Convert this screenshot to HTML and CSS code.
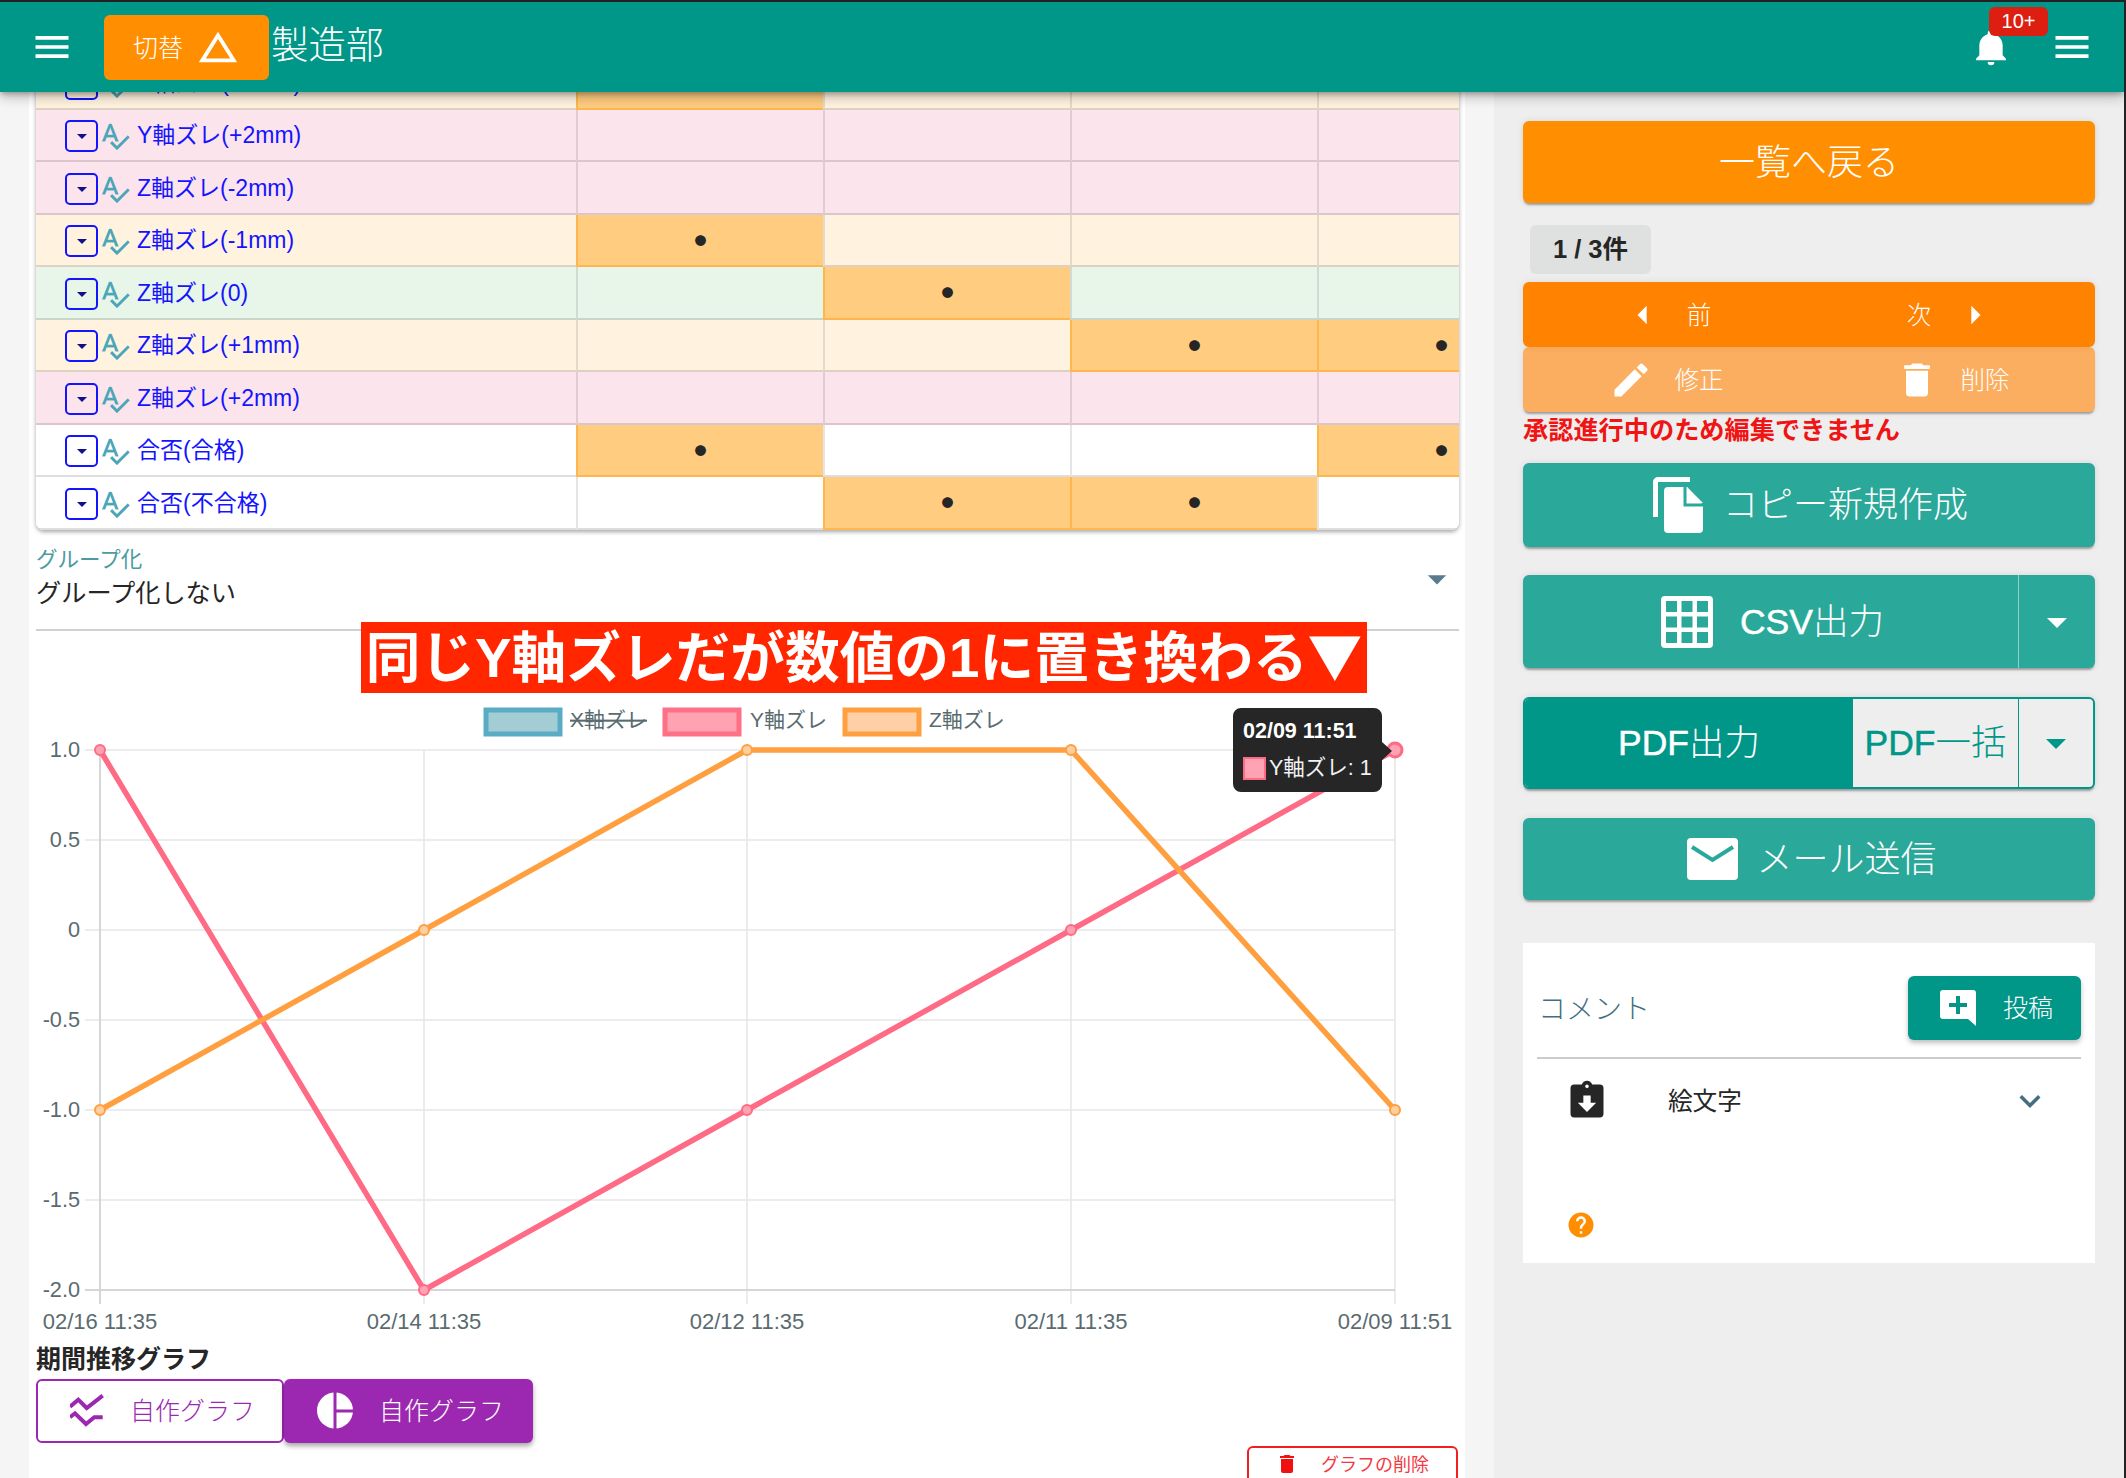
FILE: index.html
```html
<!DOCTYPE html>
<html lang="ja">
<head>
<meta charset="utf-8">
<title>製造部</title>
<link rel="stylesheet" href="styles.css">
</head>
<body>
<div class="page">
  <header class="topbar">
    <svg class="menu-icon" viewBox="0 0 24 24"><path d="M3,6H21V8H3V6M3,11H21V13H3V11M3,16H21V18H3V16Z"/></svg>
    <button class="switch-btn"><span>切替</span><svg class="switch-icon" viewBox="0 0 24 24"><path d="M12,7.77L18.39,18H5.61L12,7.77M12,4L2,20H22L12,4Z"/></svg></button>
    <h1 class="title">製造部</h1>
    <div class="bell">
      <svg class="bell-icon" viewBox="0 0 24 24"><path d="M21,19V20H3V19L5,17V11C5,7.9 7.03,5.17 10,4.29C10,4.19 10,4.1 10,4A2,2 0 0,1 12,2A2,2 0 0,1 14,4C14,4.1 14,4.19 14,4.29C16.97,5.17 19,7.9 19,11V17L21,19M14,21A2,2 0 0,1 12,23A2,2 0 0,1 10,21Z"/></svg>
      <span class="badge">10+</span>
    </div>
    <svg class="menu-icon menu-right" viewBox="0 0 24 24"><path d="M3,6H21V8H3V6M3,11H21V13H3V11M3,16H21V18H3V16Z"/></svg>
  </header>

  <div class="body">
    <div class="gutter"></div>
    <main class="content">
      <div class="table-wrap">
        <table class="matrix">
          <colgroup><col class="c-name"><col class="c-val"><col class="c-val"><col class="c-val"><col class="c-val"></colgroup>
          <tbody>
            <tr class="cream"><td><div class="name"><span class="check"><svg viewBox="0 0 24 24"><path d="M7,10L12,15L17,10H7Z"/></svg></span><svg class="spell" viewBox="0 0 24 24"><path d="M21.59,11.59L13.5,19.68L9.83,16L8.42,17.41L13.5,22.5L23,13M6.43,11L8.5,5.5L10.57,11M12.45,16H14.54L9.43,3H7.57L2.46,16H4.55L5.67,13H11.31L12.45,16Z"/></svg><span class="name-text">Y軸ズレ(+1mm)</span></div></td><td class="on">●</td><td></td><td></td><td></td></tr>
            <tr class="pink"><td><div class="name"><span class="check"><svg viewBox="0 0 24 24"><path d="M7,10L12,15L17,10H7Z"/></svg></span><svg class="spell" viewBox="0 0 24 24"><path d="M21.59,11.59L13.5,19.68L9.83,16L8.42,17.41L13.5,22.5L23,13M6.43,11L8.5,5.5L10.57,11M12.45,16H14.54L9.43,3H7.57L2.46,16H4.55L5.67,13H11.31L12.45,16Z"/></svg><span class="name-text">Y軸ズレ(+2mm)</span></div></td><td></td><td></td><td></td><td></td></tr>
            <tr class="pink"><td><div class="name"><span class="check"><svg viewBox="0 0 24 24"><path d="M7,10L12,15L17,10H7Z"/></svg></span><svg class="spell" viewBox="0 0 24 24"><path d="M21.59,11.59L13.5,19.68L9.83,16L8.42,17.41L13.5,22.5L23,13M6.43,11L8.5,5.5L10.57,11M12.45,16H14.54L9.43,3H7.57L2.46,16H4.55L5.67,13H11.31L12.45,16Z"/></svg><span class="name-text">Z軸ズレ(-2mm)</span></div></td><td></td><td></td><td></td><td></td></tr>
            <tr class="cream"><td><div class="name"><span class="check"><svg viewBox="0 0 24 24"><path d="M7,10L12,15L17,10H7Z"/></svg></span><svg class="spell" viewBox="0 0 24 24"><path d="M21.59,11.59L13.5,19.68L9.83,16L8.42,17.41L13.5,22.5L23,13M6.43,11L8.5,5.5L10.57,11M12.45,16H14.54L9.43,3H7.57L2.46,16H4.55L5.67,13H11.31L12.45,16Z"/></svg><span class="name-text">Z軸ズレ(-1mm)</span></div></td><td class="on">●</td><td></td><td></td><td></td></tr>
            <tr class="green"><td><div class="name"><span class="check"><svg viewBox="0 0 24 24"><path d="M7,10L12,15L17,10H7Z"/></svg></span><svg class="spell" viewBox="0 0 24 24"><path d="M21.59,11.59L13.5,19.68L9.83,16L8.42,17.41L13.5,22.5L23,13M6.43,11L8.5,5.5L10.57,11M12.45,16H14.54L9.43,3H7.57L2.46,16H4.55L5.67,13H11.31L12.45,16Z"/></svg><span class="name-text">Z軸ズレ(0)</span></div></td><td></td><td class="on">●</td><td></td><td></td></tr>
            <tr class="cream"><td><div class="name"><span class="check"><svg viewBox="0 0 24 24"><path d="M7,10L12,15L17,10H7Z"/></svg></span><svg class="spell" viewBox="0 0 24 24"><path d="M21.59,11.59L13.5,19.68L9.83,16L8.42,17.41L13.5,22.5L23,13M6.43,11L8.5,5.5L10.57,11M12.45,16H14.54L9.43,3H7.57L2.46,16H4.55L5.67,13H11.31L12.45,16Z"/></svg><span class="name-text">Z軸ズレ(+1mm)</span></div></td><td></td><td></td><td class="on">●</td><td class="on">●</td></tr>
            <tr class="pink"><td><div class="name"><span class="check"><svg viewBox="0 0 24 24"><path d="M7,10L12,15L17,10H7Z"/></svg></span><svg class="spell" viewBox="0 0 24 24"><path d="M21.59,11.59L13.5,19.68L9.83,16L8.42,17.41L13.5,22.5L23,13M6.43,11L8.5,5.5L10.57,11M12.45,16H14.54L9.43,3H7.57L2.46,16H4.55L5.67,13H11.31L12.45,16Z"/></svg><span class="name-text">Z軸ズレ(+2mm)</span></div></td><td></td><td></td><td></td><td></td></tr>
            <tr class="plain"><td><div class="name"><span class="check"><svg viewBox="0 0 24 24"><path d="M7,10L12,15L17,10H7Z"/></svg></span><svg class="spell" viewBox="0 0 24 24"><path d="M21.59,11.59L13.5,19.68L9.83,16L8.42,17.41L13.5,22.5L23,13M6.43,11L8.5,5.5L10.57,11M12.45,16H14.54L9.43,3H7.57L2.46,16H4.55L5.67,13H11.31L12.45,16Z"/></svg><span class="name-text">合否(合格)</span></div></td><td class="on">●</td><td></td><td></td><td class="on">●</td></tr>
            <tr class="plain"><td><div class="name"><span class="check"><svg viewBox="0 0 24 24"><path d="M7,10L12,15L17,10H7Z"/></svg></span><svg class="spell" viewBox="0 0 24 24"><path d="M21.59,11.59L13.5,19.68L9.83,16L8.42,17.41L13.5,22.5L23,13M6.43,11L8.5,5.5L10.57,11M12.45,16H14.54L9.43,3H7.57L2.46,16H4.55L5.67,13H11.31L12.45,16Z"/></svg><span class="name-text">合否(不合格)</span></div></td><td></td><td class="on">●</td><td class="on">●</td><td></td></tr>
          </tbody>
        </table>
      </div>

      <div class="group-select">
        <div class="group-text">
          <div class="group-label">グループ化</div>
          <div class="group-value">グループ化しない</div>
        </div>
        <svg class="group-caret" viewBox="0 0 24 24"><path d="M7,10L12,15L17,10H7Z"/></svg>
      </div>

      <div class="chart">
        <div class="banner">同じY軸ズレだが数値の1に置き換わる<span class="banner-arrow">▼</span></div>
        <svg class="chart-svg" viewBox="36 630 1423 715">
          <g class="grid">
            <line x1="85" y1="749" x2="1395" y2="749"/>
            <line x1="85" y1="839" x2="1395" y2="839"/>
            <line x1="85" y1="929" x2="1395" y2="929"/>
            <line x1="85" y1="1019" x2="1395" y2="1019"/>
            <line x1="85" y1="1109" x2="1395" y2="1109"/>
            <line x1="85" y1="1199" x2="1395" y2="1199"/>
            <line x1="424" y1="749" x2="424" y2="1303"/>
            <line x1="747" y1="749" x2="747" y2="1303"/>
            <line x1="1071" y1="749" x2="1071" y2="1303"/>
            <line x1="1395" y1="749" x2="1395" y2="1303"/>
          </g>
          <g class="axis">
            <line x1="85" y1="1289" x2="1395" y2="1289"/>
            <line x1="100" y1="749" x2="100" y2="1303"/>
          </g>
          <g class="ticks-y">
            <text x="80" y="756">1.0</text>
            <text x="80" y="846">0.5</text>
            <text x="80" y="936">0</text>
            <text x="80" y="1026">-0.5</text>
            <text x="80" y="1116">-1.0</text>
            <text x="80" y="1206">-1.5</text>
            <text x="80" y="1296">-2.0</text>
          </g>
          <g class="ticks-x">
            <text x="100" y="1328">02/16 11:35</text>
            <text x="424" y="1328">02/14 11:35</text>
            <text x="747" y="1328">02/12 11:35</text>
            <text x="1071" y="1328">02/11 11:35</text>
            <text x="1395" y="1328">02/09 11:51</text>
          </g>
          <g class="legend">
            <rect class="lg-blue" x="486" y="709" width="74" height="24"/>
            <text class="struck" x="570" y="726">X軸ズレ</text>
            <rect class="lg-pink" x="665" y="709" width="74" height="24"/>
            <text x="750" y="726">Y軸ズレ</text>
            <rect class="lg-orange" x="845" y="709" width="74" height="24"/>
            <text x="929" y="726">Z軸ズレ</text>
          </g>
          <polyline class="line-pink" points="100,749 424,1289 747,1109 1071,929 1395,749"/>
          <polyline class="line-orange" points="100,1109 424,929 747,749 1071,749 1395,1109"/>
          <g class="pts-pink">
            <circle cx="100" cy="749" r="5"/><circle cx="424" cy="1289" r="5"/><circle cx="747" cy="1109" r="5"/><circle cx="1071" cy="929" r="5"/><circle class="pt-hover" cx="1395" cy="749" r="7"/>
          </g>
          <g class="pts-orange">
            <circle cx="100" cy="1109" r="5"/><circle cx="424" cy="929" r="5"/><circle cx="747" cy="749" r="5"/><circle cx="1071" cy="749" r="5"/><circle cx="1395" cy="1109" r="5"/>
          </g>
          <path class="tip" d="M1241,707H1374a8,8 0 0 1 8,8V741L1392,750L1382,759V783a8,8 0 0 1 -8,8H1241a8,8 0 0 1 -8,-8V715a8,8 0 0 1 8,-8Z"/>
          <text class="tip-title" x="1243" y="737">02/09 11:51</text>
          <rect class="tip-swatch" x="1244" y="757" width="21" height="21"/>
          <text class="tip-body" x="1269" y="774">Y軸ズレ: 1</text>
        </svg>
      </div>

      <h2 class="period">期間推移グラフ</h2>
      <div class="graph-btns">
        <button class="graph-btn outline">
          <svg class="graph-icon" viewBox="0 0 34 33"><path d="M0 12.7L8.3 5.7L16.7 14L32.7 1.7M0 23.3L5 19.3L16 30L24.3 23.3H32.7"/></svg>
          <span>自作グラフ</span>
        </button>
        <button class="graph-btn solid">
          <svg class="pie-icon" viewBox="0 0 36 37"><circle class="pie" cx="18" cy="18.5" r="18"/><path class="pie-cut" d="M18 0V37M18 19H36"/></svg>
          <span>自作グラフ</span>
        </button>
      </div>
      <div class="delete-row">
        <button class="delete-btn">
          <svg class="delete-icon" viewBox="0 0 24 24"><path d="M19,4H15.5L14.5,3H9.5L8.5,4H5V6H19M6,19A2,2 0 0,0 8,21H16A2,2 0 0,0 18,19V7H6V19Z"/></svg>
          <span>グラフの削除</span>
        </button>
      </div>
    </main>
    <div class="gutter"></div>

    <aside class="side">
      <button class="btn orange back"><span>一覧へ戻る</span></button>
      <div class="count">1 / 3件</div>
      <div class="btn-pair nav">
        <button class="half"><svg class="i44" viewBox="0 0 24 24"><path d="M14,7L9,12L14,17V7Z"/></svg><span>前</span></button>
        <button class="half"><span>次</span><svg class="i44" viewBox="0 0 24 24"><path d="M10,17L15,12L10,7V17Z"/></svg></button>
      </div>
      <div class="btn-pair edit">
        <button class="half"><svg class="i44" viewBox="0 0 24 24"><path d="M20.71,7.04C21.1,6.65 21.1,6 20.71,5.63L18.37,3.29C18,2.9 17.35,2.9 16.96,3.29L15.12,5.12L18.87,8.87M3,17.25V21H6.75L17.81,9.93L14.06,6.18L3,17.25Z"/></svg><span>修正</span></button>
        <button class="half"><svg class="i44" viewBox="0 0 24 24"><path d="M19,4H15.5L14.5,3H9.5L8.5,4H5V6H19M6,19A2,2 0 0,0 8,21H16A2,2 0 0,0 18,19V7H6V19Z"/></svg><span>削除</span></button>
      </div>
      <p class="notice">承認進行中のため編集できません</p>

      <button class="btn teal copy">
        <svg class="copy-icon" viewBox="0 0 50 56"><path d="M0 40V5a5 5 0 0 1 5-5h32v5H5v35z"/><path d="M15 10h19l16 18v24a4 4 0 0 1-4 4H15a4 4 0 0 1-4-4V14a4 4 0 0 1 4-4z"/><path class="copy-fold" d="M32 10V28H50"/><path d="M34 10L50 26H34Z"/></svg>
        <span>コピー新規作成</span>
      </button>

      <div class="split teal csv">
        <button class="split-main">
          <svg class="grid-icon" viewBox="0 0 52 52"><rect class="g-base" width="52" height="52" rx="4"/><rect x="5" y="5" width="11" height="11"/><rect x="20.5" y="5" width="11" height="11"/><rect x="36" y="5" width="11" height="11"/><rect x="5" y="20.5" width="11" height="11"/><rect x="20.5" y="20.5" width="11" height="11"/><rect x="36" y="20.5" width="11" height="11"/><rect x="5" y="36" width="11" height="11"/><rect x="20.5" y="36" width="11" height="11"/><rect x="36" y="36" width="11" height="11"/></svg>
          <span><span class="latin">CSV</span>出力</span>
        </button>
        <button class="split-caret"><svg class="i44" viewBox="0 0 24 24"><path d="M7,10L12,15L17,10H7Z"/></svg></button>
      </div>

      <div class="split pdf">
        <button class="pdf-main"><span class="latin">PDF</span>出力</button>
        <button class="pdf-all"><span class="latin">PDF</span>一括</button>
        <button class="split-caret pdf-caret"><svg class="i44" viewBox="0 0 24 24"><path d="M7,10L12,15L17,10H7Z"/></svg></button>
      </div>

      <button class="btn teal mail">
        <svg class="mail-icon" viewBox="0 0 51 42"><rect class="m-base" width="51" height="42" rx="4"/><path class="m-flap" d="M5 9L25.5 22L46 9"/></svg>
        <span>メール送信</span>
      </button>

      <section class="comment">
        <div class="comment-head">
          <span class="comment-title">コメント</span>
          <button class="post-btn">
            <svg class="post-icon" viewBox="0 0 36 36"><path class="p-base" d="M3 0H33a3 3 0 0 1 3 3V36L28 29H3a3 3 0 0 1-3-3V3a3 3 0 0 1 3-3Z"/><path class="p-plus" d="M18 6V24M9 15H27"/></svg>
            <span>投稿</span>
          </button>
        </div>
        <div class="comment-item">
          <svg class="i44 clip" viewBox="0 0 24 24"><path d="M19,3H14.82C14.4,1.84 13.3,1 12,1C10.7,1 9.6,1.84 9.18,3H5A2,2 0 0,0 3,5V19A2,2 0 0,0 5,21H19A2,2 0 0,0 21,19V5A2,2 0 0,0 19,3M12,3A1,1 0 0,1 13,4A1,1 0 0,1 12,5A1,1 0 0,1 11,4A1,1 0 0,1 12,3M12,18L7,13H10V9H14V13H17L12,18Z"/></svg>
          <span class="emoji">絵文字</span>
          <svg class="chev" viewBox="0 0 24 24"><path d="M7.41,8.58L12,13.17L16.59,8.58L18,10L12,16L6,10L7.41,8.58Z"/></svg>
        </div>
        <svg class="help" viewBox="0 0 24 24"><path d="M15.07,11.25L14.17,12.17C13.45,12.89 13,13.5 13,15H11V14.5C11,13.39 11.45,12.39 12.17,11.67L13.41,10.41C13.78,10.05 14,9.55 14,9C14,7.89 13.1,7 12,7A2,2 0 0,0 10,9H8A4,4 0 0,1 12,5A4,4 0 0,1 16,9C16,9.88 15.64,10.67 15.07,11.25M13,19H11V17H13M12,2A10,10 0 0,0 2,12A10,10 0 0,0 12,22A10,10 0 0,0 22,12A10,10 0 0,0 12,2Z"/></svg>
      </section>
    </aside>
  </div>
</div>
</body>
</html>
```
FILE: styles.css
```css
* { box-sizing: border-box; }
html, body { margin: 0; padding: 0; }
body {
  font-family: "Liberation Sans", "Noto Sans CJK JP", sans-serif;
  color: #262626;
  background: #f5f5f5;
}
button { font: inherit; color: inherit; border: 0; padding: 0; background: none; }
svg { display: block; flex: none; }
.page {
  width: 2126px;
  height: 1478px;
  overflow: hidden;
  display: flex;
  flex-direction: column;
  border-right: 2px solid #222;
}

/* top bar */
.topbar {
  position: relative;
  z-index: 5;
  flex: none;
  height: 92px;
  display: flex;
  align-items: center;
  padding: 0 30px 0 30px;
  background: #009688;
  border-top: 2px solid #222;
  box-shadow: 0 3px 5px -1px rgba(0,0,0,.25), 0 6px 10px rgba(0,0,0,.14), 0 1px 18px rgba(0,0,0,.12);
  color: #fff;
}
.menu-icon { width: 44px; height: 44px; fill: #fff; }
.menu-right { margin-left: 39px; }
.switch-btn {
  margin-left: 30px;
  width: 165px;
  height: 65px;
  display: flex;
  align-items: center;
  gap: 13px;
  padding-left: 29px;
  background: #ff8f00;
  border-radius: 6px;
  font-size: 25px;
  font-weight: 300;
  color: #fff;
}
.switch-btn span { margin-bottom: 3px; }
.switch-icon { width: 46px; height: 46px; fill: #fff; margin-left: -1px; }
.title { margin: 0 0 5px 2px; font-size: 37.5px; line-height: 50px; font-weight: 300; }
.bell { position: relative; margin-left: auto; }
.bell-icon { width: 40px; height: 40px; fill: #fff; }
.badge {
  position: absolute;
  left: 18px;
  top: -20px;
  width: 59px;
  height: 29px;
  border-radius: 6px;
  background: #dc1f10;
  color: #fff;
  font-size: 20px;
  line-height: 29px;
  text-align: center;
}

/* layout */
.body { flex: 1; min-height: 0; display: flex; }
.gutter { width: 29px; flex: none; background: #f5f5f5; }
.content {
  width: 1436px;
  flex: none;
  margin-top: -35px;
  padding: 0 6px 0 7px;
  background: #fff;
}
.side { flex: 1; min-width: 0; background: #eee; padding: 29px 29px 0 29px; }

/* table */
.table-wrap {
  width: 1423px;
  overflow: hidden;
  border-radius: 0 0 8px 8px;
  box-shadow: 0 2px 4px rgba(0,0,0,.35);
}
.matrix { width: 1528px; table-layout: fixed; border-collapse: separate; border-spacing: 0; }
.c-name { width: 540px; }
.c-val { width: 247px; }
.matrix tr { height: 52.5px; }
.matrix td {
  padding: 0;
  text-align: center;
  font-family: "Noto Sans CJK JP", sans-serif;
  font-size: 12px;
  line-height: 1;
  border-bottom: 2px solid rgba(0,0,0,.13);
  border-left: 2px solid rgba(0,0,0,.1);
}
.matrix td:first-child { border-left: 0; text-align: left; }
.matrix tr.cream td { background: #fff3e0; }
.matrix tr.pink td { background: #fce4ec; }
.matrix tr.green td { background: #e8f5e9; }
.matrix tr.plain td { background: #fff; }
.matrix tr td.on { padding-top: 2px; background: #ffcc80; border-left-color: #ffb74d; border-bottom-color: #ffb74d; }
.name {
  display: flex;
  align-items: center;
  padding-left: 29px;
  font-family: "Liberation Sans", "Noto Sans CJK JP", sans-serif;
  font-size: 23px;
  line-height: 30px;
  color: #1414ff;
}
.name-text { margin-top: 1px; }
.check {
  width: 33px;
  height: 32px;
  margin-top: 3px;
  display: flex;
  align-items: center;
  justify-content: center;
  border: 2px solid #1414ff;
  border-radius: 5px;
}
.check svg { width: 24px; height: 24px; fill: #10108c; }
.spell { width: 32px; height: 32px; margin: 3px 6px 0 1px; fill: #4ca6b8; stroke: #4ca6b8; stroke-width: .25; }

/* group select */
.group-select {
  margin-top: 18px;
  display: flex;
  align-items: center;
  justify-content: space-between;
  padding-bottom: 20px;
  border-bottom: 2px solid #d0d0d0;
}
.group-label { font-size: 21.5px; line-height: 24px; color: #4d9aa0; }
.group-value { margin-top: 6px; font-size: 25.2px; line-height: 31px; }
.group-caret { width: 44px; height: 44px; fill: #5a7a90; margin-top: 2px; }

/* chart */
.chart { position: relative; height: 714px; }
.chart-svg { width: 1423px; height: 715px; }
.banner {
  position: absolute;
  z-index: 1;
  left: 325px;
  top: -9px;
  width: 1006px;
  height: 71px;
  background: #ff2600;
  color: #fff;
  font-size: 54.7px;
  font-weight: bold;
  line-height: 64px;
  text-align: center;
  white-space: nowrap;
}
.banner-arrow { font-family: "Noto Sans CJK JP", sans-serif; }
.grid line { stroke: #e6e6e6; stroke-width: 1.5; }
.axis line { stroke: #d6d6d6; stroke-width: 2; }
.ticks-y text, .ticks-x text, .legend text { font-size: 21.7px; fill: #5a6b70; }
.ticks-x text { font-size: 22px; }
.legend text { font-size: 21px; }
.ticks-y text { text-anchor: end; }
.ticks-x text { text-anchor: middle; }
.struck { text-decoration: line-through; }
.lg-blue { fill: #a3cdd3; stroke: #5aacc5; stroke-width: 5; }
.lg-pink { fill: #ffa3b2; stroke: #ff6f85; stroke-width: 5; }
.lg-orange { fill: #ffcfa5; stroke: #ff9f40; stroke-width: 5; }
.line-pink, .line-orange { fill: none; stroke-width: 5.5; stroke-linejoin: round; }
.line-pink { stroke: #ff6a85; }
.line-orange { stroke: #ff9f40; }
.pts-pink circle { fill: #ffa3b4; stroke: #ff6a85; stroke-width: 2; }
.pts-orange circle { fill: #ffcf9f; stroke: #ff9f40; stroke-width: 2; }
.pts-pink .pt-hover { stroke-width: 3; }
.tip { fill: #262626; }
.tip-title { font-size: 21.5px; font-weight: bold; fill: #fff; }
.tip-swatch { fill: #ffa3b4; stroke: #ff6a85; stroke-width: 2; }
.tip-body { font-size: 21.5px; fill: #f2f2f2; }

/* bottom of the left column */
.period { margin: 0; font-size: 25px; line-height: 29px; font-weight: bold; }
.graph-btns { margin-top: 5px; display: flex; }
.graph-btn {
  width: 249px;
  height: 64px;
  display: flex;
  align-items: center;
  border-radius: 6px;
  font-size: 25px;
  font-weight: 300;
}
.graph-btn span { margin-bottom: 4px; }
.outline { width: 248px; padding-left: 32px; gap: 26px; background: #fff; border: 2px solid #9c27b0; color: #9c27b0; }
.solid { padding-left: 33px; gap: 26px; background: #9c27b0; color: #fff; box-shadow: 0 3px 5px rgba(0,0,0,.35); }
.graph-icon { width: 34px; height: 33px; fill: none; stroke: #9c27b0; stroke-width: 4; }
.pie-icon { width: 36px; height: 37px; }
.pie { fill: #fff; }
.pie-cut { fill: none; stroke: #9c27b0; stroke-width: 3; }
.delete-row { margin-top: 3px; padding-right: 1px; display: flex; justify-content: flex-end; }
.delete-btn {
  width: 211px;
  height: 50px;
  display: flex;
  align-items: flex-start;
  padding: 4px 0 0 26px;
  gap: 22px;
  background: #fff;
  border: 2px solid #f02020;
  border-radius: 6px;
  color: #f23a44;
  font-size: 18px;
  line-height: 26px;
}
.delete-icon { width: 24px; height: 24px; fill: #f01010; }

/* side buttons */
.i44 { width: 44px; height: 44px; fill: currentColor; }
.btn {
  width: 100%;
  display: flex;
  align-items: center;
  justify-content: center;
  border-radius: 6px;
  color: #fff;
  font-size: 36px;
  font-weight: 300;
  box-shadow: 0 3px 2px -1px rgba(0,0,0,.3), 0 0 7px rgba(0,0,0,.1);
}
.btn > span, .split-main > span { margin-bottom: 7px; }
.orange { background: #ff8f00; }
.teal { background: #2aa89a; }
.back { height: 82px; }
.count {
  margin: 22px 0 8px 7px;
  width: 121px;
  height: 49px;
  border-radius: 6px;
  background: #dfe0e0;
  font-size: 25.5px;
  font-weight: bold;
  line-height: 49px;
  text-align: center;
}
.btn-pair {
  height: 65px;
  display: grid;
  grid-template-columns: 1fr 1fr;
  border-radius: 6px;
  color: #fff;
  font-size: 24.5px;
  font-weight: 300;
}
.half > span { margin-bottom: 3px; }
.nav { background: #ff8200; position: relative; z-index: 1; box-shadow: 0 0 7px rgba(0,0,0,.08); }
.edit { background: #fbae5f; box-shadow: 0 3px 2px -1px rgba(0,0,0,.3), 0 0 7px rgba(0,0,0,.08); }
.half { display: flex; align-items: center; justify-content: center; gap: 22px; }
.notice { margin: 5px 0 0; font-size: 25.2px; font-weight: bold; line-height: 26px; color: #f01414; }
.copy { height: 84px; margin-top: 20px; padding-left: 3px; gap: 20px; font-size: 35px; }
.copy-icon { width: 50px; height: 56px; fill: #fff; }
.copy-fold { fill: none; stroke: #2aa89a; stroke-width: 3; }
.latin { -webkit-text-stroke: .5px currentColor; }
.split {
  display: flex;
  border-radius: 6px;
  overflow: hidden;
  box-shadow: 0 3px 2px -1px rgba(0,0,0,.3), 0 0 7px rgba(0,0,0,.1);
  font-size: 35.5px;
  font-weight: 300;
}
.csv { height: 93px; margin-top: 28px; color: #fff; }
.split-main { flex: 1; min-width: 0; display: flex; align-items: center; justify-content: center; gap: 27px; padding-left: 4px; }
.split-caret {
  width: 77px;
  display: flex;
  align-items: center;
  justify-content: center;
  border-left: 1px solid #8fd0c8;
}
.split-caret svg { width: 48px; height: 48px; }
.grid-icon { width: 52px; height: 52px; fill: #2aa89a; }
.g-base { fill: #fff; }
.pdf { height: 92px; margin-top: 29px; border: 2px solid #009688; background: #eee; color: #009688; }
.pdf-main { width: 328px; padding-bottom: 7px; background: #009688; color: #fff; }
.pdf-all { width: 165px; padding-bottom: 7px; white-space: nowrap; }
.pdf-caret { width: 75px; border-left-color: #009688; }
.mail { height: 82px; margin-top: 29px; padding-left: 6px; gap: 18px; }
.mail-icon { width: 51px; height: 42px; }
.m-base { fill: #fff; }
.m-flap { fill: none; stroke: #2aa89a; stroke-width: 4; }

/* comment */
.comment { height: 320px; margin-top: 43px; padding: 0 14px; background: #fff; }
.comment-head {
  display: flex;
  align-items: center;
  justify-content: space-between;
  padding: 33px 0 17px 1px;
  border-bottom: 2px solid #ccc;
}
.comment-title { margin-bottom: 3px; font-size: 28px; font-weight: 300; color: #3f6f82; }
.post-btn {
  width: 173px;
  height: 64px;
  display: flex;
  align-items: center;
  gap: 27px;
  padding-left: 32px;
  border-radius: 6px;
  background: #009688;
  color: #fff;
  font-size: 25px;
  font-weight: 300;
  box-shadow: 0 3px 5px rgba(0,0,0,.25);
}
.post-btn span { margin-bottom: 4px; }
.post-icon { width: 36px; height: 36px; }
.p-base { fill: #fff; }
.p-plus { fill: none; stroke: #009688; stroke-width: 4; }
.comment-item { display: flex; align-items: center; padding: 20px 30px 0 28px; }
.clip { color: #262626; }
.emoji { margin-left: 59px; margin-top: 2px; font-size: 24.6px; line-height: 32px; }
.chev { width: 42px; height: 42px; margin-left: auto; fill: #446e82; }
.help { width: 30px; height: 30px; margin: 87px 0 0 29px; fill: #ff8f00; }
```
